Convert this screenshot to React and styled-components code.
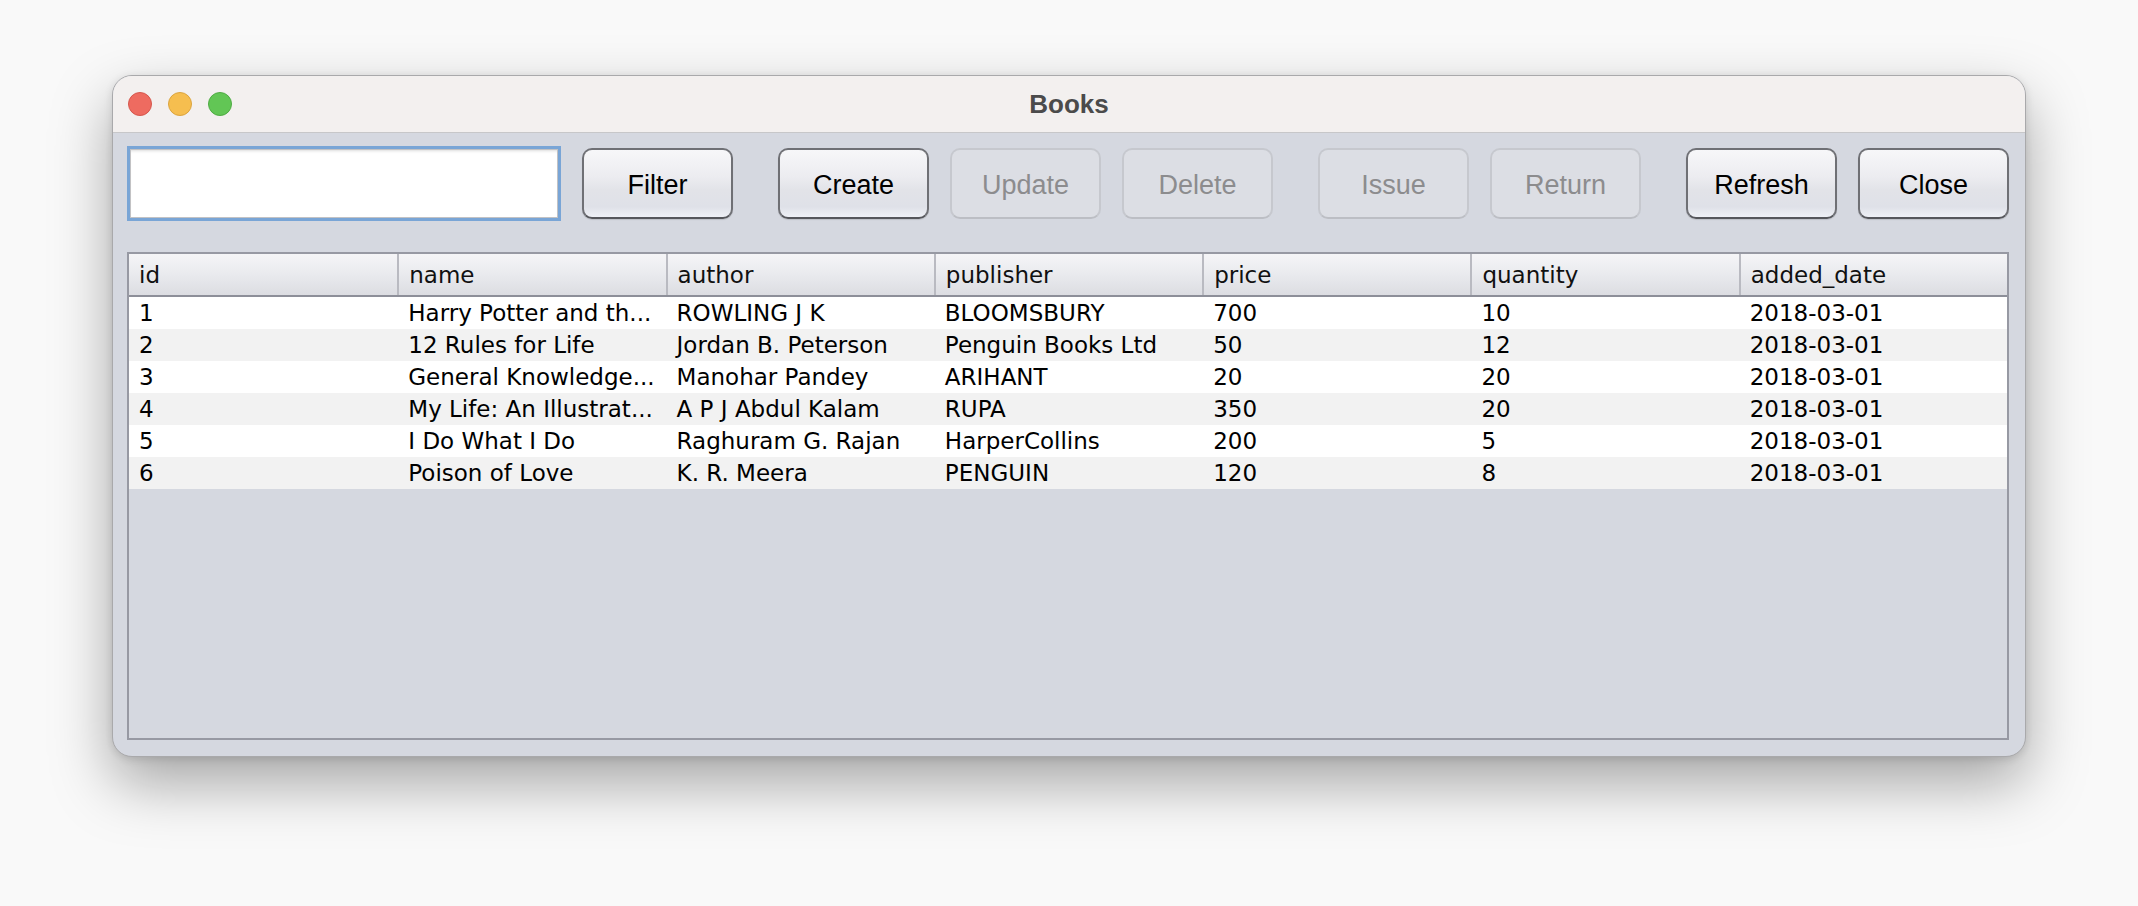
import styled, { createGlobalStyle } from 'styled-components';

const GlobalStyle = createGlobalStyle`
  html, body {
    margin: 0;
    padding: 0;
    background: #f9f9f9;
  }
  body {
    font-family: "Liberation Sans", Arial, sans-serif;
  }
`;

const Page = styled.div`
  width: 2138px;
  height: 906px;
  box-sizing: border-box;
  padding: 75px 0 0 112px;
  overflow: hidden;
`;

const Window = styled.div`
  width: 1914px;
  height: 682px;
  box-sizing: border-box;
  display: flex;
  flex-direction: column;
  border: 1px solid #a9a9ab;
  border-radius: 20px;
  overflow: hidden;
  background: #d5d8e0;
  box-shadow: 0 26px 60px rgba(0, 0, 0, 0.34), 0 2px 8px rgba(0, 0, 0, 0.12);
`;

const TitleBar = styled.div`
  height: 56px;
  flex: none;
  display: grid;
  grid-template-columns: 1fr auto 1fr;
  align-items: center;
  background: #f3f0ef;
  border-bottom: 1px solid #c7c7c9;
`;

const Lights = styled.div`
  display: flex;
  gap: 16px;
  padding-left: 15px;
`;

const Light = styled.span`
  width: 24px;
  height: 24px;
  box-sizing: border-box;
  border-radius: 50%;
  background: ${p => p.color};
  border: 1px solid ${p => p.edge};
`;

const Title = styled.div`
  font-family: "Liberation Sans", Arial, sans-serif;
  font-weight: 700;
  font-size: 26px;
  color: #4b4b4b;
`;

const Body = styled.div`
  flex: 1;
  display: flex;
  flex-direction: column;
  padding: 13px 16px 16px 14px;
  gap: 31px;
  min-height: 0;
`;

const Toolbar = styled.div`
  display: flex;
  align-items: center;
  height: 75px;
`;

const SearchField = styled.input`
  width: 437px;
  height: 75px;
  box-sizing: border-box;
  border: 3px solid #79a5d6;
  background: #ffffff;
  box-shadow: inset 0 0 0 1px #c2c2c4, inset 0 3px 3px -1px rgba(0, 0, 0, 0.14);
  outline: none;
  margin-right: 21px;
  font-size: 24px;
`;

const Button = styled.button`
  width: 151px;
  height: 71px;
  flex: none;
  box-sizing: border-box;
  margin-left: ${p => (p.$wide ? '45px' : p.$first ? '0' : '21px')};
  border-radius: 10px;
  font-family: "Liberation Sans", Arial, sans-serif;
  font-size: 27px;
  padding: 4px 0 0;
  color: ${p => (p.disabled ? '#8c8c8e' : '#000000')};
  border: 2px solid ${p => (p.disabled ? '#c6c8ce' : '#6f7075')};
  border-bottom-color: ${p => (p.disabled ? '#bcbec4' : '#55565b')};
  background: ${p =>
    p.disabled
      ? '#dcdee4'
      : 'linear-gradient(#f7f7f9 0%, #ececf0 40%, #e2e3e8 60%, #dfe1e8 85%, #eef0f6 100%)'};
  box-shadow: ${p => (p.disabled ? 'none' : '0 1px 1px rgba(0, 0, 0, 0.12)')};
`;

const Table = styled.div`
  flex: 1;
  display: flex;
  flex-direction: column;
  border: 2px solid #9799a3;
  background: #d5d8e0;
  min-height: 0;
`;

const Row = styled.div`
  display: grid;
  grid-template-columns: repeat(7, 1fr);
  height: 32px;
  align-items: center;
  background: ${p => (p.$alt ? '#f2f2f2' : '#ffffff')};
`;

const HeaderRow = styled.div`
  display: grid;
  grid-template-columns: repeat(7, 1fr);
  height: 41px;
  border-bottom: 2px solid #8d8f99;
  background: linear-gradient(#f5f5f7, #e9eaee 50%, #dcdde2);
`;

const HeaderCell = styled.div`
  display: flex;
  align-items: center;
  padding-left: 10px;
  border-left: ${p => (p.$first ? 'none' : '2px solid #b9bac1')};
  font-family: "DejaVu Sans", Verdana, sans-serif;
  font-size: 23px;
  color: #111111;
  white-space: nowrap;
  overflow: hidden;
`;

const Cell = styled.div`
  padding-left: ${p => (p.$first ? '10px' : '11px')};
  font-family: "DejaVu Sans", Verdana, sans-serif;
  font-size: 23px;
  line-height: 32px;
  color: #000000;
  white-space: nowrap;
  overflow: hidden;
`;

const columns = ['id', 'name', 'author', 'publisher', 'price', 'quantity', 'added_date'];

const books = [
  ['1', 'Harry Potter and th...', 'ROWLING J K', 'BLOOMSBURY', '700', '10', '2018-03-01'],
  ['2', '12 Rules for Life', 'Jordan B. Peterson', 'Penguin Books Ltd', '50', '12', '2018-03-01'],
  ['3', 'General Knowledge...', 'Manohar Pandey', 'ARIHANT', '20', '20', '2018-03-01'],
  ['4', 'My Life: An Illustrat...', 'A P J Abdul Kalam', 'RUPA', '350', '20', '2018-03-01'],
  ['5', 'I Do What I Do', 'Raghuram G. Rajan', 'HarperCollins', '200', '5', '2018-03-01'],
  ['6', 'Poison of Love', 'K. R. Meera', 'PENGUIN', '120', '8', '2018-03-01'],
];

export default function App() {
  return (
    <Page>
      <GlobalStyle />
      <Window>
        <TitleBar>
          <Lights>
            <Light color="#ee6b60" edge="#d5574d" />
            <Light color="#f6be4f" edge="#dba43f" />
            <Light color="#62c655" edge="#4fab44" />
          </Lights>
          <Title>Books</Title>
          <div />
        </TitleBar>
        <Body>
          <Toolbar>
            <SearchField type="text" />
            <Button $first>Filter</Button>
            <Button $wide>Create</Button>
            <Button disabled>Update</Button>
            <Button disabled>Delete</Button>
            <Button $wide disabled>Issue</Button>
            <Button disabled>Return</Button>
            <Button $wide>Refresh</Button>
            <Button>Close</Button>
          </Toolbar>
          <Table>
            <HeaderRow>
              {columns.map((c, i) => (
                <HeaderCell key={c} $first={i === 0}>{c}</HeaderCell>
              ))}
            </HeaderRow>
            {books.map((b, r) => (
              <Row key={b[0]} $alt={r % 2 === 1}>
                {b.map((v, i) => (
                  <Cell key={i} $first={i === 0}>{v}</Cell>
                ))}
              </Row>
            ))}
          </Table>
        </Body>
      </Window>
    </Page>
  );
}
